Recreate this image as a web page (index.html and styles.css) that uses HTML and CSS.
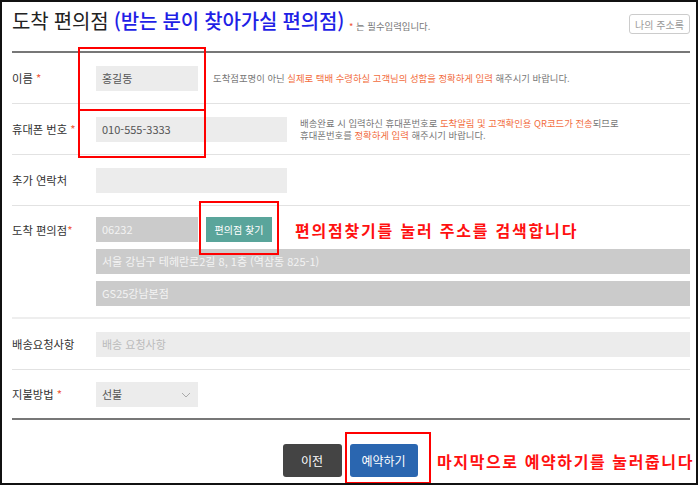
FILE: index.html
```html
<!DOCTYPE html>
<html lang="ko">
<head>
<meta charset="utf-8">
<link rel="stylesheet" href="styles.css">
</head>
<body>
<div class="frame">
  <div class="header">
    <h1 class="title">도착 편의점 <span class="title-blue">(받는 분이 찾아가실 편의점)</span></h1>
    <span class="req-note"><span class="star">*</span> 는 필수입력입니다.</span>
    <button class="addr-book">나의 주소록</button>
  </div>

  <div class="row">
    <div class="label">이름 <span class="star">*</span></div>
    <div class="field inline">
      <div class="input w102">홍길동</div>
      <p class="help">도착점포명이 아닌 <em>실제로 택배 수령하실 고객님의 성함을 정확하게 입력</em> 해주시기 바랍니다.</p>
    </div>
  </div>

  <div class="row">
    <div class="label">휴대폰 번호 <span class="star">*</span></div>
    <div class="field inline">
      <div class="input w191">010-555-3333</div>
      <p class="help">배송완료 시 입력하신 휴대폰번호로 <em>도착알림 및 고객확인용 QR코드가 전송</em>되므로<br>휴대폰번호를 <em>정확하게 입력</em> 해주시기 바랍니다.</p>
    </div>
  </div>

  <div class="row">
    <div class="label">추가 연락처</div>
    <div class="field inline">
      <div class="input w191"></div>
    </div>
  </div>

  <div class="row row-store">
    <div class="label label-top">도착 편의점<span class="star">*</span></div>
    <div class="field stack">
      <div class="inline">
        <div class="input dis w102">06232</div>
        <button class="find-btn">편의점 찾기</button>
        <span class="note note-find">편의점찾기를 눌러 주소를 검색합니다</span>
      </div>
      <div class="input dis full">서울 강남구 테헤란로2길 8, 1층 (역삼동 825-1)</div>
      <div class="input dis full">GS25강남본점</div>
    </div>
  </div>

  <div class="row">
    <div class="label">배송요청사항</div>
    <div class="field">
      <div class="input full ph">배송 요청사항</div>
    </div>
  </div>

  <div class="row last">
    <div class="label">지불방법 <span class="star">*</span></div>
    <div class="field">
      <div class="input w102 select">선불
        <svg class="chev" width="10" height="6" viewBox="0 0 10 6"><path d="M1 1 L5 5 L9 1" fill="none" stroke="#aaa" stroke-width="1"/></svg>
      </div>
    </div>
  </div>

  <div class="actions">
    <button class="btn btn-prev">이전</button>
    <button class="btn btn-next">예약하기</button>
    <span class="note note-next">마지막으로 예약하기를 눌러줍니다</span>
  </div>

  <div class="mark mark-name"></div>
  <div class="mark mark-phone"></div>
  <div class="mark mark-find"></div>
  <div class="mark mark-next"></div>
</div>
</body>
</html>
```

FILE: styles.css
```css
* { box-sizing: border-box; }
html, body { margin: 0; padding: 0; background: #fff; }
body {
  font-family: "Noto Sans CJK KR", "Noto Sans", sans-serif;
  color: #333;
}
.frame {
  position: relative;
  width: 698px;
  height: 485px;
  border: 2px solid #111;
  padding: 0 6px 0 10px;
  overflow: hidden;
}
.header {
  display: flex;
  align-items: flex-end;
  height: 51px;
  padding-bottom: 18px;
  border-bottom: 2px solid #777;
  position: relative;
}
.title {
  margin: 0;
  font-size: 20px;
  font-weight: 400;
  line-height: 24px;
  color: #222;
  letter-spacing: -0.2px;
}
.title-blue { color: #1f1fe6; font-weight: 500; }
.req-note {
  margin-left: 5px;
  font-size: 9.4px;
  color: #777;
  line-height: 14px;
  padding-bottom: 0;
}
.star { color: #f05a3c; }
.addr-book {
  margin-left: auto;
  align-self: flex-start;
  margin-top: 12px;
  width: 61px;
  height: 20px;
  border: 1px solid #ccc;
  border-radius: 3px;
  background: #fff;
  color: #999;
  font-family: inherit;
  font-size: 10px;
  padding: 0;
}
.row {
  display: flex;
  align-items: center;
  min-height: 51px;
  border-bottom: 1px solid #e2e2e2;
}
.row-store {
  align-items: flex-start;
  padding: 11px 0 11px;
  border-bottom: 2px solid #eee;
}
.row.last { border-bottom: 2px solid #777; min-height: 50px; }
.label {
  width: 84px;
  flex: none;
  font-size: 11.3px;
  color: #333;
}
.label-top { padding-top: 5px; }
.field { flex: 1; min-width: 0; }
.inline { display: flex; align-items: center; }
.stack { display: flex; flex-direction: column; gap: 7px; }
.input {
  height: 25px;
  background: #ececec;
  font-size: 11px;
  color: #555;
  line-height: 25px;
  padding: 0 6px;
  white-space: nowrap;
  flex: none;
}
.w102 { width: 102px; }
.w191 { width: 191px; }
.full { width: 100%; }
.dis { background: #cbcbcb; color: #f3f3f3; }
.ph { color: #bbb; }
.select { position: relative; }
.chev { position: absolute; right: 7px; top: 10px; }
.help {
  margin: 0 0 0 15px;
  font-size: 9.4px;
  line-height: 12.5px;
  color: #777;
}
.help em { font-style: normal; color: #f26c3d; }
.inline .w191 + .help { margin-left: 13px; }
.find-btn {
  margin-left: 8px;
  width: 66px;
  height: 25px;
  border: none;
  background: #5aa59b;
  color: #fff;
  font-family: inherit;
  font-size: 10px;
  padding: 0;
}
.note {
  color: #ff1010;
  font-size: 16px;
  font-weight: 700;
  letter-spacing: 1.8px;
  white-space: nowrap;
}
.note-find { margin-left: 23px; }
.actions {
  display: flex;
  justify-content: center;
  gap: 8px;
  padding-top: 24px;
  padding-right: 2px;
  position: relative;
}
.btn {
  height: 33px;
  border: none;
  border-radius: 3px;
  color: #fff;
  font-family: inherit;
  font-size: 12px;
  padding: 0;
}
.btn-prev { width: 59px; background: #444; }
.btn-next { width: 68px; background: #2a66b0; }
.note-next {
  position: absolute;
  left: 425px;
  top: 29px;
  letter-spacing: 1.6px;
}
.mark {
  position: absolute;
  border: 2px solid #f00;
}
.mark-name { left: 76px; top: 45px; width: 128px; height: 64px; }
.mark-phone { left: 76px; top: 107px; width: 128px; height: 49px; }
.mark-find { left: 197px; top: 199px; width: 80px; height: 54px; }
.mark-next { left: 343px; top: 430px; width: 86px; height: 52px; }
```
